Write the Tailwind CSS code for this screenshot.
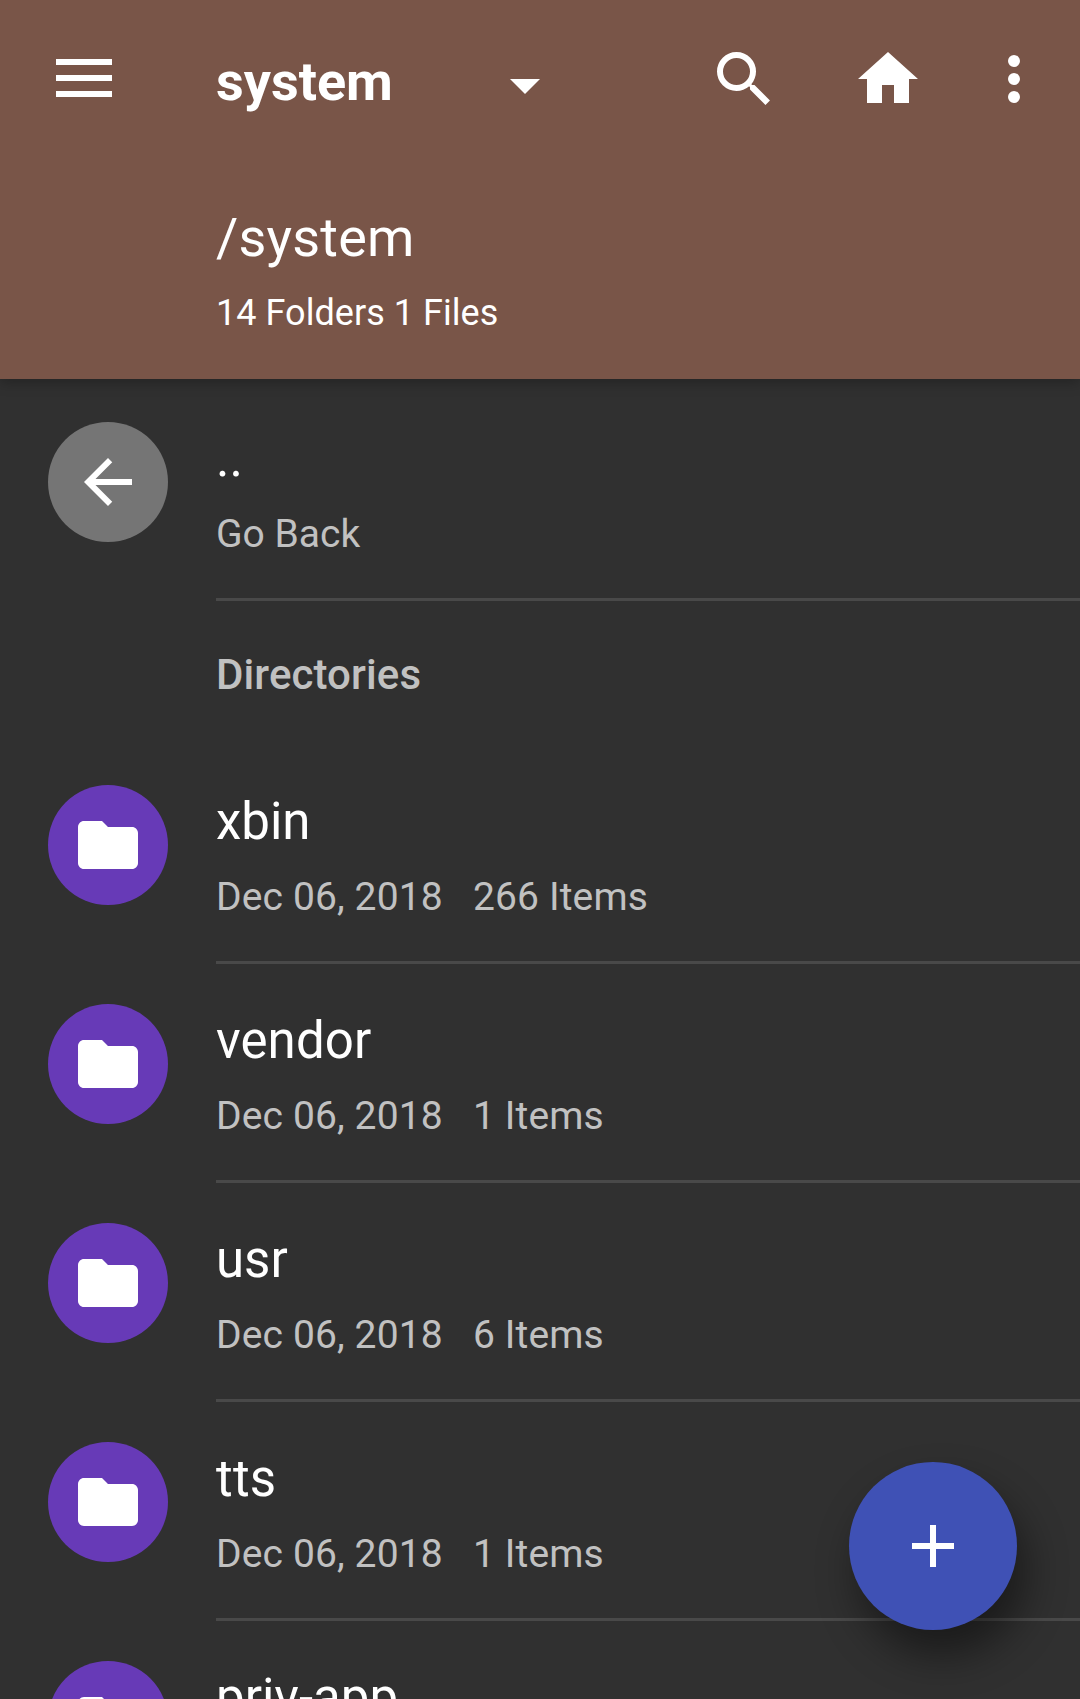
<!DOCTYPE html>
<html lang="en"><head><meta charset="utf-8"><title>File manager</title>
<script src="https://cdn.jsdelivr.net/npm/@tailwindcss/browser@4"></script></head>
<body class="h-[1699px] w-[1080px] overflow-hidden bg-[#303030] font-[Roboto,sans-serif] text-white">
<svg class="hidden"><symbol id="folder" viewBox="0 0 24 24"><path d="M10 4H4c-1.1 0-1.99.9-1.99 2L2 18c0 1.1.9 2 2 2h16c1.1 0 2-.9 2-2V8c0-1.1-.9-2-2-2h-8l-2-2z"/></symbol></svg>
<div class="relative flex h-[1699px] flex-col overflow-hidden">
<header class="relative z-10 h-[379px] shrink-0 bg-[#795548] shadow-[0_4px_12px_rgba(0,0,0,0.25)]">
<div class="flex h-[158px] items-center">
<svg class="mb-[2px] ml-[48px] size-[72px] shrink-0" viewBox="0 0 72 72" fill="currentColor"><path d="M8 17h56v6H8zM8 33h56v6H8zM8 49h56v6H8z"/></svg>
<h1 class="ml-[96px] w-[273px] pt-[6px] text-[54px] leading-[64px] font-bold">system</h1>
<svg class="mt-[12px] size-[72px] shrink-0" viewBox="0 0 24 24" fill="currentColor"><path d="M7 10l5 5 5-5z"/></svg>
<svg class="ml-[147px] size-[72px] shrink-0" viewBox="0 0 24 24" fill="currentColor"><path d="M9.5 3A6.5 6.5 0 0 1 16 9.5c0 1.61-.59 3.09-1.56 4.23l.27.27h.79l5.15 5.15-1.5 1.5L14 15.5v-.79l-.27-.27A6.516 6.516 0 0 1 9.5 16a6.5 6.5 0 0 1 0-13m0 2a4.5 4.5 0 1 0 0 9 4.5 4.5 0 0 0 0-9z"/></svg>
<svg class="ml-[72px] size-[72px] shrink-0" viewBox="0 0 24 24" fill="currentColor"><path d="M10 20v-6h4v6h5v-8h3L12 3 2 12h3v8z"/></svg>
<svg class="ml-[54px] size-[72px] shrink-0" viewBox="0 0 24 24" fill="currentColor"><path d="M12 8a2 2 0 1 0 0-4 2 2 0 0 0 0 4zm0 2a2 2 0 1 0 0 4 2 2 0 0 0 0-4zm0 6a2 2 0 1 0 0 4 2 2 0 0 0 0-4z"/></svg>
</div>
<div class="ml-[216px] pt-[48px]"><p class="text-[54px] leading-[64px] tracking-[0.2px]">/system</p><p class="mt-[22px] text-[36px] leading-[42px] tracking-[0.04px]">14 Folders 1 Files</p></div>
</header>
<main class="pt-[3px] whitespace-nowrap">
<div class="flex h-[219px] pl-[48px]">
<div class="mt-[40px] flex size-[120px] shrink-0 items-center justify-center rounded-full bg-[#757575]"><svg class="size-[72px]" viewBox="0 0 24 24" fill="currentColor"><path d="M20 11H7.83l5.59-5.59L12 4l-8 8 8 8 1.41-1.41L7.83 13H20v-2z"/></svg></div>
<div class="ml-[48px] flex-1 border-b-[3px] border-[#494949] pt-[47px]"><p class="text-[51px] leading-[60px]">..</p><p class="mt-[22px] text-[39px] leading-[46px] text-[#c1c1c1]">Go Back</p></div>
</div>
<h2 class="h-[144px] pt-[50px] pl-[216px] text-[42px] leading-[48px] font-medium tracking-[0.1px] text-[#c1c1c1]">Directories</h2>
<div class="flex h-[219px] pl-[48px]">
<div class="mt-[40px] flex size-[120px] shrink-0 items-center justify-center rounded-full bg-[#673ab7]"><svg class="size-[72px]" fill="currentColor"><use href="#folder"/></svg></div>
<div class="ml-[48px] flex-1 border-b-[3px] border-[#494949] pt-[47px]"><p class="text-[51px] leading-[60px]">xbin</p><p class="mt-[22px] flex text-[39px] leading-[46px] tracking-[0.13px] text-[#c1c1c1]"><span class="w-[257px]">Dec 06, 2018</span><span>266 Items</span></p></div>
</div>
<div class="flex h-[219px] pl-[48px]">
<div class="mt-[40px] flex size-[120px] shrink-0 items-center justify-center rounded-full bg-[#673ab7]"><svg class="size-[72px]" fill="currentColor"><use href="#folder"/></svg></div>
<div class="ml-[48px] flex-1 border-b-[3px] border-[#494949] pt-[47px]"><p class="text-[51px] leading-[60px] tracking-[0.1px]">vendor</p><p class="mt-[22px] flex text-[39px] leading-[46px] tracking-[0.13px] text-[#c1c1c1]"><span class="w-[257px]">Dec 06, 2018</span><span>1 Items</span></p></div>
</div>
<div class="flex h-[219px] pl-[48px]">
<div class="mt-[40px] flex size-[120px] shrink-0 items-center justify-center rounded-full bg-[#673ab7]"><svg class="size-[72px]" fill="currentColor"><use href="#folder"/></svg></div>
<div class="ml-[48px] flex-1 border-b-[3px] border-[#494949] pt-[47px]"><p class="text-[51px] leading-[60px]">usr</p><p class="mt-[22px] flex text-[39px] leading-[46px] tracking-[0.13px] text-[#c1c1c1]"><span class="w-[257px]">Dec 06, 2018</span><span>6 Items</span></p></div>
</div>
<div class="flex h-[219px] pl-[48px]">
<div class="mt-[40px] flex size-[120px] shrink-0 items-center justify-center rounded-full bg-[#673ab7]"><svg class="size-[72px]" fill="currentColor"><use href="#folder"/></svg></div>
<div class="ml-[48px] flex-1 border-b-[3px] border-[#494949] pt-[47px]"><p class="text-[51px] leading-[60px] tracking-[0.2px]">tts</p><p class="mt-[22px] flex text-[39px] leading-[46px] tracking-[0.13px] text-[#c1c1c1]"><span class="w-[257px]">Dec 06, 2018</span><span>1 Items</span></p></div>
</div>
<div class="flex h-[219px] pl-[48px]">
<div class="mt-[40px] flex size-[120px] shrink-0 items-center justify-center rounded-full bg-[#673ab7]"><svg class="size-[72px]" fill="currentColor"><use href="#folder"/></svg></div>
<div class="ml-[48px] flex-1 pt-[47px]"><p class="text-[51px] leading-[60px]">priv-app</p></div>
</div>
</main>
<button aria-label="Add" class="absolute right-[63px] bottom-[69px] flex size-[168px] items-center justify-center rounded-full bg-[#3f51b5] shadow-[9px_25px_42px_rgba(0,0,0,0.45)]"><svg class="size-[72px]" viewBox="0 0 24 24" fill="currentColor"><path d="M19 13h-6v6h-2v-6H5v-2h6V5h2v6h6v2z"/></svg></button>
</div></body></html>
